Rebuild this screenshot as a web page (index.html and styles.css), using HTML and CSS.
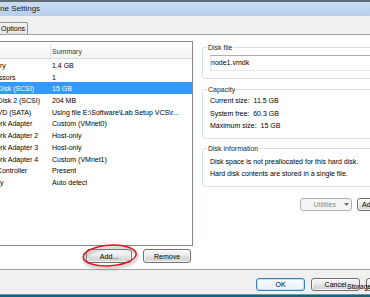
FILE: index.html
```html
<!DOCTYPE html>
<html lang="en">
<head>
  <meta charset="UTF-8" />
  <title>Virtual Machine Settings</title>
  <link rel="stylesheet" href="styles.css">
</head>
<body>
  <div class="dialog">
    <div class="titlebar">Virtual Machine Settings</div>

    <div class="tabs">
      <div class="tab tab-active">Hardware</div>
      <div class="tab">Options</div>
    </div>

    <div class="panel">
      <!-- device list -->
      <div class="devices">
        <div class="list">
          <div class="list-head">
            <div class="col-name">Device</div>
            <div class="col-sum">Summary</div>
          </div>
          <div class="row"><div class="col-name">Memory</div><div class="col-sum">1.4 GB</div></div>
          <div class="row"><div class="col-name">Processors</div><div class="col-sum">1</div></div>
          <div class="row selected"><div class="col-name">Hard Disk (SCSI)</div><div class="col-sum">15 GB</div></div>
          <div class="row"><div class="col-name">Hard Disk 2 (SCSI)</div><div class="col-sum">204 MB</div></div>
          <div class="row"><div class="col-name">CD/DVD (SATA)</div><div class="col-sum">Using file E:\Software\Lab Setup VCS\r...</div></div>
          <div class="row"><div class="col-name">Network Adapter</div><div class="col-sum">Custom (VMnet0)</div></div>
          <div class="row"><div class="col-name">Network Adapter 2</div><div class="col-sum">Host-only</div></div>
          <div class="row"><div class="col-name">Network Adapter 3</div><div class="col-sum">Host-only</div></div>
          <div class="row"><div class="col-name">Network Adapter 4</div><div class="col-sum">Custom (VMnet1)</div></div>
          <div class="row"><div class="col-name">USB Controller</div><div class="col-sum">Present</div></div>
          <div class="row"><div class="col-name">Display</div><div class="col-sum">Auto detect</div></div>
        </div>
        <div class="list-actions">
          <button class="btn btn-add">Add...</button>
          <button class="btn btn-remove">Remove</button>
        </div>
      </div>

      <!-- selected device details -->
      <div class="side">
        <div class="group group-file">
          <span class="group-label">Disk file</span>
          <div class="field">node1.vmdk</div>
        </div>
        <div class="group group-capacity">
          <span class="group-label">Capacity</span>
          <div>Current size:&nbsp; 11.5 GB</div>
          <div>System free:&nbsp; 60.3 GB</div>
          <div>Maximum size:&nbsp; 15 GB</div>
        </div>
        <div class="group group-info">
          <span class="group-label">Disk information</span>
          <div>Disk space is not preallocated for this hard disk.</div>
          <div>Hard disk contents are stored in a single file.</div>
        </div>
        <div class="tools">
          <button class="btn btn-utilities" disabled>
            <span>Utilities</span>
            <svg width="5" height="3" viewBox="0 0 5 3"><path d="M0 0h5L2.5 3z" fill="#6d6d6d"/></svg>
          </button>
          <button class="btn btn-advanced">Advanced...</button>
        </div>
      </div>
    </div>

    <div class="footer">
      <button class="btn btn-default">OK</button>
      <button class="btn">Cancel</button>
      <button class="btn">Help</button>
    </div>
    <div class="taskbar"></div>
  </div>

  <!-- red marker drawn round the Add button -->
  <svg class="callout" width="62" height="32" viewBox="0 0 62 32">
    <defs>
      <filter id="soft" x="-20%" y="-40%" width="140%" height="180%">
        <feGaussianBlur stdDeviation="1.2"/>
      </filter>
    </defs>
    <ellipse cx="30.7" cy="16" rx="26.5" ry="10.3" transform="rotate(-4 30.7 16)" fill="none" stroke="#8a8a8a" stroke-width="2" opacity="0.55" filter="url(#soft)"/>
    <ellipse cx="29.7" cy="13.5" rx="26.5" ry="10.3" transform="rotate(-4 29.7 13.5)" fill="none" stroke="#e0161d" stroke-width="1.5"/>
  </svg>

  <span class="peek-label">Storage</span>
</body>
</html>
```

FILE: styles.css
```css
* {
  box-sizing: border-box;
}

body {
  margin: 0;
  width: 370px;
  height: 297px;
  overflow: hidden;
  position: relative;
  background: #f0f0f0;
  font-family: "Liberation Sans", Arial, sans-serif;
  font-size: 7px;
  color: #000;
}

/* dialog is wider than the window, its left part is cut off */
.dialog {
  width: 483px;
  height: 297px;
  margin-left: -60px;
  display: flex;
  flex-direction: column;
}

.titlebar {
  flex: none;
  height: 16px;
  border-top: 2px solid #626a74;
  background: linear-gradient(#c9ddf2, #b8cfea);
  padding-left: 14px;
  font-size: 8px;
  line-height: 14px;
  color: #1a1a1a;
  white-space: nowrap;
}

.tabs {
  flex: none;
  height: 18px;
  display: flex;
  align-items: flex-end;
  padding-left: 8px;
}

.tab {
  height: 12px;
  padding: 0 2px;
  border: 1px solid #8e9198;
  border-bottom: none;
  border-radius: 2px 2px 0 0;
  background: linear-gradient(#f4f4f4, #e4e4e4);
  line-height: 11px;
  white-space: nowrap;
}

.tab-active {
  width: 50px;
  height: 14px;
  margin-bottom: -1px;
  background: #fff;
  text-align: center;
}

.panel {
  flex: none;
  height: 236px;
  margin: 0 8px;
  border: 1px solid #a3a3a3;
  background: #fff;
  padding: 6px 10px 0;
  display: grid;
  grid-template-columns: 234px 202px;
  column-gap: 9px;
  align-items: start;
}

.list {
  height: 205px;
  border: 1px solid #828790;
  background: #fff;
  overflow: hidden;
}

.list-head {
  display: flex;
  height: 17px;
  padding-top: 2px;
  line-height: 15px;
  border-bottom: 1px solid #d8dbe0;
  background: linear-gradient(#ffffff, #f2f3f5);
  color: #3c3c3c;
}

.col-name {
  flex: none;
  width: 91px;
  padding-left: 20.5px;
  white-space: nowrap;
  overflow: hidden;
}

.list-head .col-name {
  padding-left: 6px;
  border-right: 1px solid #e0e4e9;
}

.col-sum {
  padding-left: 1px;
  white-space: nowrap;
  overflow: hidden;
}

.row {
  display: flex;
  height: 11.7px;
  line-height: 13px;
}

.row.selected {
  background: #3399ff;
  color: #fff;
}

.list-actions {
  display: flex;
  justify-content: flex-end;
  gap: 11px;
  margin-top: 3px;
  padding-right: 2px;
}

.btn {
  height: 13px;
  padding: 0;
  border: 1px solid #707070;
  border-radius: 3px;
  background: linear-gradient(#f6f6f6 0%, #ececec 45%, #dedede 55%, #d3d3d3 100%);
  box-shadow: inset 0 0 0 1px rgba(255, 255, 255, 0.7);
  font: inherit;
  color: #000;
  display: flex;
  align-items: center;
  justify-content: center;
}

.btn-add {
  width: 46px;
  height: 14px;
}

.btn-remove {
  width: 48px;
  height: 14px;
}

.side {
  padding-top: 6px;
  display: flex;
  flex-direction: column;
}

.group {
  position: relative;
  border: 1px solid #d5dfe5;
  border-radius: 3px;
  white-space: nowrap;
}

.group-label {
  position: absolute;
  left: 4px;
  top: -5.5px;
  padding: 0 1px;
  background: #fff;
  line-height: 9px;
  color: #1e1e1e;
}

.group-file {
  padding: 7px;
}

.field {
  height: 16px;
  border: 1px solid;
  border-color: #abadb3 #e2e3ea #e3e9ef #e2e3ea;
  line-height: 14px;
}

.group-capacity {
  margin-top: 10px;
  padding: 5px 7px;
  line-height: 12.7px;
}

.group-info {
  margin-top: 9px;
  padding: 6.5px 7px 5.8px;
  line-height: 12.3px;
}

.tools {
  display: flex;
  justify-content: flex-end;
  gap: 5px;
  margin-top: 11px;
}

.btn-utilities {
  width: 52px;
  justify-content: flex-end;
  gap: 8px;
  padding-right: 2px;
  border-color: #adb2b5;
  background: #f4f4f4;
  box-shadow: none;
  color: #8a8a8a;
}

.btn-advanced {
  width: 47px;
}

.footer {
  flex: none;
  height: 24px;
  display: flex;
  justify-content: flex-end;
  gap: 6px;
  padding: 8px 8px 0;
}

.footer .btn {
  width: 49px;
}

.btn-default {
  border-color: #3c7fb1;
  background: linear-gradient(#f9fcff, #e6f1fa);
  box-shadow: inset 0 0 0 1px #bfe1f7;
}

.taskbar {
  flex: none;
  height: 3px;
  border-top: 1px solid #56a0b7;
  background: #1f6277;
}

.callout {
  position: absolute;
  left: 80px;
  top: 242px;
}

.peek-label {
  position: absolute;
  left: 347px;
  top: 282px;
  line-height: 9px;
  white-space: nowrap;
}
```
